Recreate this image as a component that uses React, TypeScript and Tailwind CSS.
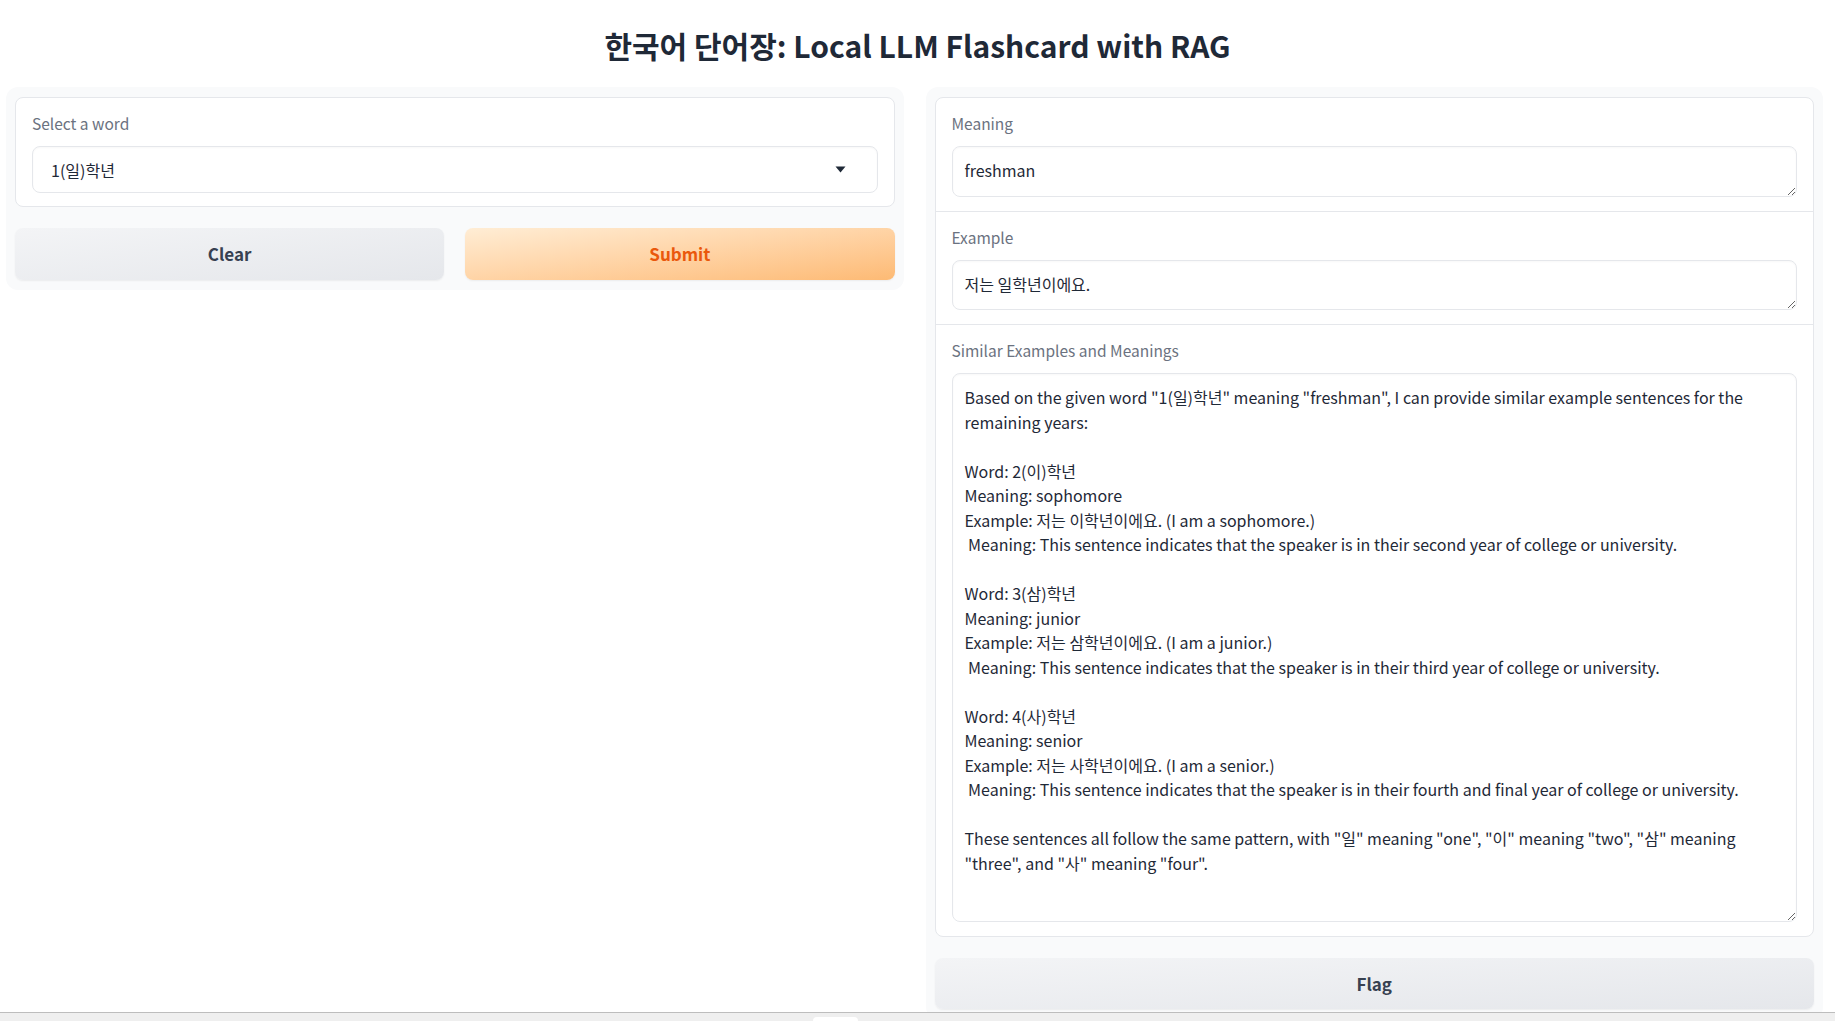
import { useState } from 'react'

const font = { fontFamily: '"Noto Sans CJK KR", "Noto Sans", sans-serif' }

const similar = `Based on the given word "1(일)학년" meaning "freshman", I can provide similar example sentences for the
remaining years:

Word: 2(이)학년
Meaning: sophomore
Example: 저는 이학년이에요. (I am a sophomore.)
 Meaning: This sentence indicates that the speaker is in their second year of college or university.

Word: 3(삼)학년
Meaning: junior
Example: 저는 삼학년이에요. (I am a junior.)
 Meaning: This sentence indicates that the speaker is in their third year of college or university.

Word: 4(사)학년
Meaning: senior
Example: 저는 사학년이에요. (I am a senior.)
 Meaning: This sentence indicates that the speaker is in their fourth and final year of college or university.

These sentences all follow the same pattern, with "일" meaning "one", "이" meaning "two", "삼" meaning
"three", and "사" meaning "four".`

function Field({
  label,
  value,
  height,
  last,
}: {
  label: string
  value: string
  height: string
  last?: boolean
}) {
  return (
    <div className={`px-4 pt-[15px] pb-[14px] ${last ? '' : 'border-b border-[#e5e7eb]'}`}>
      <div className="mb-[13px] text-[15.5px] leading-5 text-[#6b7280]">{label}</div>
      <textarea
        readOnly
        value={value}
        className={`block w-full ${height} rounded-lg border border-[#e5e7eb] bg-white px-3 py-[11px] text-[16px] leading-[24.5px] text-[#1f2937] shadow-[inset_0_1px_2px_rgba(0,0,0,0.03)] outline-none`}
        style={font}
      />
    </div>
  )
}

export default function App() {
  const [word] = useState('1(일)학년')

  return (
    <div className="flex h-[1021px] flex-col overflow-hidden bg-white text-[#1f2937]" style={font}>
      <div className="h-[1012px] overflow-hidden">
        <h1 className="flex h-[87px] items-center justify-center pt-[3px] text-[30px] font-semibold text-[#1f2937]">
          한국어 단어장: Local LLM Flashcard with RAG
        </h1>
        <div className="flex items-start gap-[22px] pl-[6px] pr-[12px]">
          <section className="flex-1 rounded-xl bg-[#f9fafb] px-[9px] pt-[10px] pb-[10px]">
            <div className="rounded-lg border border-[#e5e7eb] bg-white px-4 pt-[15px] pb-[13px]">
              <div className="mb-[13px] text-[15.5px] leading-5 text-[#6b7280]">Select a word</div>
              <div className="flex h-[47px] items-center justify-between rounded-lg border border-[#e5e7eb] bg-white pl-[18px] pr-[31px] shadow-[inset_0_1px_2px_rgba(0,0,0,0.03)]">
                <span className="text-[16px] text-[#1f2937]">{word}</span>
                <svg width="11" height="7" viewBox="0 0 11 7">
                  <path d="M0.5 0.5h10L5.5 6.5z" fill="#1f2937" />
                </svg>
              </div>
            </div>
            <div className="mt-[21px] flex gap-[21px]">
              <button
                type="button"
                className="h-[52px] flex-1 rounded-lg bg-gradient-to-br from-[#f3f4f6] to-[#e5e7eb] text-[17px] font-semibold text-[#374151] shadow-[0_1px_2px_rgba(0,0,0,0.06)]"
              >
                Clear
              </button>
              <button
                type="button"
                className="h-[52px] flex-1 rounded-lg bg-gradient-to-br from-[#ffedd5] to-[#fdba74] text-[17px] font-semibold text-[#ea580c] shadow-[0_1px_2px_rgba(0,0,0,0.06)]"
              >
                Submit
              </button>
            </div>
          </section>

          <section className="flex-1 rounded-xl bg-[#f9fafb] px-[9px] pt-[10px] pb-[10px]">
            <div className="overflow-hidden rounded-lg border border-[#e5e7eb] bg-white">
              <Field label="Meaning" value="freshman" height="h-[51px]" />
              <Field label="Example" value="저는 일학년이에요." height="h-[50px]" />
              <Field label="Similar Examples and Meanings" value={similar} height="h-[549px]" last />
            </div>
            <button
              type="button"
              className="mt-[21px] h-[51px] w-full rounded-lg bg-gradient-to-br from-[#f3f4f6] to-[#e5e7eb] text-[17px] font-semibold text-[#374151] shadow-[0_1px_2px_rgba(0,0,0,0.06)]"
            >
              Flag
            </button>
          </section>
        </div>
      </div>
      <div className="relative h-[9px] border-t border-[#bdbdbd] bg-[#efefef]">
        <div className="absolute left-[813px] top-[4px] h-[6px] w-[45px] rounded-t-sm bg-white" />
      </div>
    </div>
  )
}
